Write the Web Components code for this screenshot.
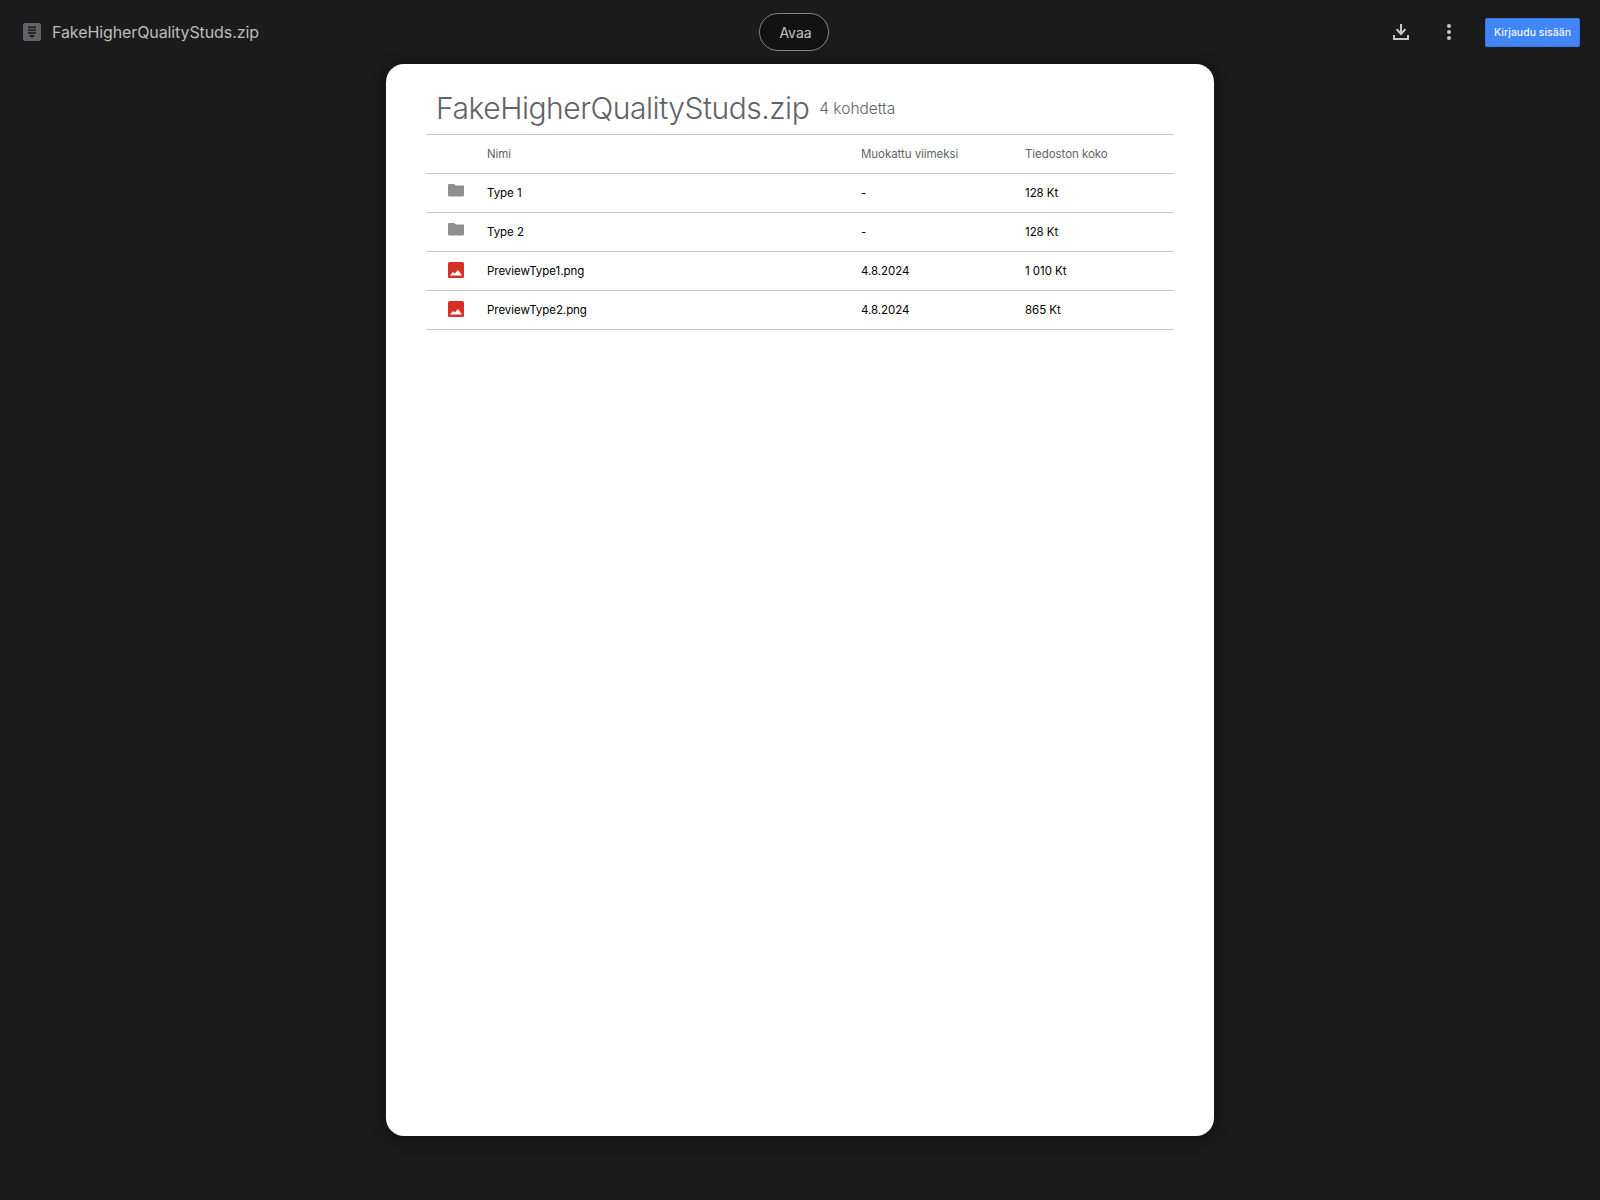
<!DOCTYPE html>
<html lang="fi">
<head>
<meta charset="utf-8">
<title>FakeHigherQualityStuds.zip</title>
<style>
    html, body { margin: 0; height: 100%; background: #1b1b1b; }
    body { font-family: Inter, Roboto, "Liberation Sans", sans-serif; overflow: hidden; }
</style>
</head>
<body>
<viewer-app>
    <viewer-bar slot="bar" name="FakeHigherQualityStuds.zip"></viewer-bar>
    <zip-listing name="FakeHigherQualityStuds.zip" count="4 kohdetta">
        <zip-row kind="folder" name="Type 1" modified="-" size="128 Kt"></zip-row>
        <zip-row kind="folder" name="Type 2" modified="-" size="128 Kt"></zip-row>
        <zip-row kind="image" name="PreviewType1.png" modified="4.8.2024" size="1 010 Kt"></zip-row>
        <zip-row kind="image" name="PreviewType2.png" modified="4.8.2024" size="865 Kt"></zip-row>
    </zip-listing>
</viewer-app>

<script>
class ViewerApp extends HTMLElement {
    constructor() {
        super();
        this.attachShadow({ mode: 'open' });
        this.shadowRoot.innerHTML = `
            <style>
                :host { display: flex; flex-direction: column; height: 1200px; background: #1b1b1b; }
                main { display: flex; justify-content: center; padding-bottom: 64px; flex: 1; min-height: 0; }
            </style>
            <slot name="bar"></slot>
            <main><slot></slot></main>
        `;
    }
}

class ViewerBar extends HTMLElement {
    constructor() {
        super();
        this.attachShadow({ mode: 'open' });
        this.shadowRoot.innerHTML = `
            <style>
                :host { display: grid; grid-template-columns: 1fr auto 1fr; align-items: center; height: 64px; padding: 0 20px 0 23px; color: #c4c7c5; }
                .left, .right { display: flex; align-items: center; }
                .right { justify-content: flex-end; }
                .file-icon { display: block; width: 18px; height: 18px; margin-right: 11px; }
                .name { font-size: 16px; line-height: 20px; letter-spacing: -0.1px; color: #bdbdbd; white-space: nowrap; padding-bottom: 1px; }
                .open { box-sizing: border-box; width: 70px; height: 38px; border: 1px solid #80868b; border-radius: 19px; background: #121212; color: #c4c4c4; font: 14px Inter, sans-serif; padding: 0 0 0 3px; margin-right: 15px; }
                .icon { display: block; width: 24px; height: 24px; fill: #c7c7c7; }
                .download { margin-right: 24px; }
                .more { margin-right: 24px; }
                .sign-in { box-sizing: border-box; width: 95px; height: 29px; border: 1px solid #3b78e7; border-radius: 2px; background: #4285f4; color: #f2f6fe; font: 500 10.5px Inter, sans-serif; padding: 0; }
            </style>
            <div class="left">
                <svg class="file-icon" viewBox="0 0 18 18">
                    <rect width="18" height="18" rx="2" fill="#5f6368"/>
                    <path d="M5 3.5h8v1.7H5zM5 6.4h8v1.7H5zM5 9.3h8V11H5zM5.6 12h6.8L9 15z" fill="#1f1f1f"/>
                </svg>
                <span class="name"></span>
            </div>
            <button class="open">Avaa</button>
            <div class="right">
                <svg class="icon download" viewBox="0 0 24 24"><path d="M11 4h2v7.2l2.8-2.8 1.4 1.4-5.2 5.8-5.2-5.8 1.4-1.4 2.8 2.8zM4 15h2v3h12v-3h2v5H4z"/></svg>
                <svg class="icon more" viewBox="0 0 24 24"><circle cx="12" cy="6" r="2"/><circle cx="12" cy="12" r="2"/><circle cx="12" cy="18" r="2"/></svg>
                <button class="sign-in">Kirjaudu sisään</button>
            </div>
        `;
    }

    connectedCallback() {
        this.shadowRoot.querySelector('.name').textContent = this.getAttribute('name');
    }
}

class ZipListing extends HTMLElement {
    constructor() {
        super();
        this.attachShadow({ mode: 'open' });
        this.shadowRoot.innerHTML = `
            <style>
                :host { display: block; box-sizing: border-box; width: 828px; height: 1072px; padding: 0 40px; background: #fff; border-radius: 18px; box-shadow: 0 2px 16px rgba(0, 0, 0, .45); }
                header { display: flex; align-items: flex-start; height: 71px; box-sizing: border-box; padding: 26px 0 0 10px; border-bottom: 1px solid #c8c8c8; }
                h1 { margin: 0; font-size: 30px; font-weight: 300; line-height: 36px; letter-spacing: -0.46px; color: #5f6368; white-space: nowrap; }
                .count { margin: 1px 0 0 10px; font-size: 15.5px; font-weight: 300; line-height: 36px; color: #5f6368; }
                .head { display: grid; grid-template-columns: 61px 374px 164px 1fr; align-items: center; height: 38px; border-bottom: 1px solid #c8c8c8; font-size: 11.5px; letter-spacing: -0.05px; color: #5f6368; }
            </style>
            <header><h1></h1><span class="count"></span></header>
            <div class="head"><span></span><span>Nimi</span><span>Muokattu viimeksi</span><span>Tiedoston koko</span></div>
            <slot></slot>
        `;
    }

    connectedCallback() {
        this.shadowRoot.querySelector('h1').textContent = this.getAttribute('name');
        this.shadowRoot.querySelector('.count').textContent = this.getAttribute('count');
    }
}

class ZipRow extends HTMLElement {
    constructor() {
        super();
        this.attachShadow({ mode: 'open' });
        this.shadowRoot.innerHTML = `
            <style>
                :host { display: grid; grid-template-columns: 61px 374px 164px 1fr; align-items: center; height: 38px; border-bottom: 1px solid #c8c8c8; font-size: 11.5px; letter-spacing: -0.05px; color: #000; }
                svg { display: block; width: 16px; height: 16px; margin: -2px 0 0 22px; }
            </style>
            <svg viewBox="0 0 16 16"></svg>
            <span class="name"></span>
            <span class="modified"></span>
            <span class="size"></span>
        `;
    }

    connectedCallback() {
        const root = this.shadowRoot;
        root.querySelector('.name').textContent = this.getAttribute('name');
        root.querySelector('.modified').textContent = this.getAttribute('modified');
        root.querySelector('.size').textContent = this.getAttribute('size');
        root.querySelector('svg').innerHTML = this.getAttribute('kind') === 'folder'
            ? '<path d="M0 1.2C0 .5.5 0 1.2 0h5l1.6 1.6h7c.7 0 1.2.5 1.2 1.2v8.4c0 .7-.5 1.2-1.2 1.2H1.2C.5 12.4 0 11.9 0 11.2z" fill="#8f8f8f"/>'
            : '<rect width="16" height="16" rx="1.5" fill="#d93025"/><path d="M2 13.5L5 10l1.8 1.5L10 8l4 5.5z" fill="#fff"/>';
    }
}

customElements.define('viewer-app', ViewerApp);
customElements.define('viewer-bar', ViewerBar);
customElements.define('zip-listing', ZipListing);
customElements.define('zip-row', ZipRow);
</script>
</body>
</html>
